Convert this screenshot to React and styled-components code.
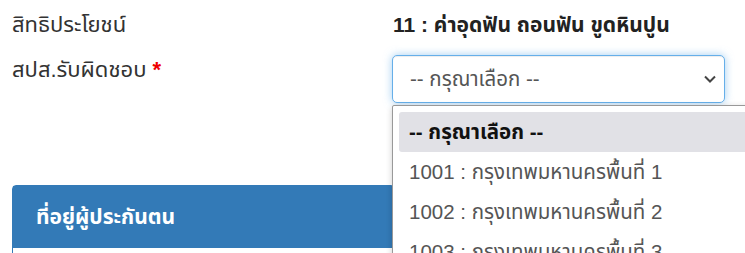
import React from 'react';
import styled, { createGlobalStyle } from 'styled-components';

const GlobalStyle = createGlobalStyle`
  body {
    margin: 0;
    background: #fff;
    font-family: 'Liberation Sans', 'Noto Sans', 'Noto Sans Thai', sans-serif;
    color: #333;
  }
`;

const options = [
  '1001 : กรุงเทพมหานครพื้นที่ 1',
  '1002 : กรุงเทพมหานครพื้นที่ 2',
  '1003 : กรุงเทพมหานครพื้นที่ 3',
];

const App = () => {
  return (
    <Page>
      <GlobalStyle />
      <FormRow top={10}>
        <Label>สิทธิประโยชน์</Label>
        <Value>11 : ค่าอุดฟัน ถอนฟัน ขูดหินปูน</Value>
      </FormRow>
      <FormRow top={15}>
        <Label>
          สปส.รับผิดชอบ <Required>*</Required>
        </Label>
        <SelectWrap>
          <SelectBox>
            <span>-- กรุณาเลือก --</span>
            <svg width="14" height="10" viewBox="0 0 14 10">
              <path d="M2 2.5 L7 7.5 L12 2.5" fill="none" stroke="#444" strokeWidth="2" />
            </svg>
          </SelectBox>
          <DropList>
            <DropItem active>-- กรุณาเลือก --</DropItem>
            {options.map(o => (
              <DropItem key={o}>{o}</DropItem>
            ))}
          </DropList>
        </SelectWrap>
      </FormRow>
      <Panel>
        <PanelHeading>ที่อยู่ผู้ประกันตน</PanelHeading>
        <PanelBody />
      </Panel>
    </Page>
  );
};

export default App;

const Page = styled.div`
  width: 745px;
  height: 253px;
  overflow: hidden;
  padding: 0 12px;
  box-sizing: border-box;
`;

const FormRow = styled.div`
  display: grid;
  grid-template-columns: 380px 333px;
  align-items: start;
  margin-top: ${props => props.top}px;
`;

const Label = styled.div`
  font-size: 22px;
  line-height: 30px;
  color: #333;
`;

const Required = styled.span`
  color: #e00;
  font-weight: 700;
`;

const Value = styled.div`
  font-size: 21px;
  line-height: 30px;
  font-weight: 700;
  color: #222;
  padding-left: 1px;
`;

const SelectWrap = styled.div`
  position: relative;
`;

const SelectBox = styled.div`
  height: 48px;
  box-sizing: border-box;
  border: 1px solid #66afe9;
  border-radius: 5px;
  box-shadow: inset 0 1px 1px rgba(0, 0, 0, 0.075), 0 0 8px rgba(102, 175, 233, 0.6);
  display: flex;
  align-items: center;
  justify-content: space-between;
  padding: 0 7px 0 17px;
  font-size: 20.5px;
  color: #555;
  background: #fff;
`;

const DropList = styled.div`
  position: absolute;
  top: 50px;
  left: 0;
  width: 380px;
  background: #fff;
  border: 1px solid #999;
  border-radius: 2px;
  padding: 6px;
  box-sizing: border-box;
  box-shadow: 0 2px 6px rgba(0, 0, 0, 0.2);
`;

const DropItem = styled.div`
  height: 40px;
  line-height: 40px;
  padding: 0 10px;
  font-size: 20.5px;
  border-radius: 3px;
  white-space: nowrap;
  color: ${props => (props.active ? '#111' : '#555')};
  font-weight: ${props => (props.active ? 700 : 400)};
  background: ${props => (props.active ? '#e1e1e6' : 'transparent')};
`;

const Panel = styled.div`
  margin-top: 82px;
  border: 1px solid #337ab7;
  border-radius: 4px 4px 0 0;
  width: 381px;
`;

const PanelHeading = styled.div`
  background: #337ab7;
  color: #fff;
  font-size: 21px;
  font-weight: 700;
  height: 62px;
  line-height: 62px;
  padding: 0 23px;
`;

const PanelBody = styled.div`
  height: 40px;
  background: #fff;
`;
